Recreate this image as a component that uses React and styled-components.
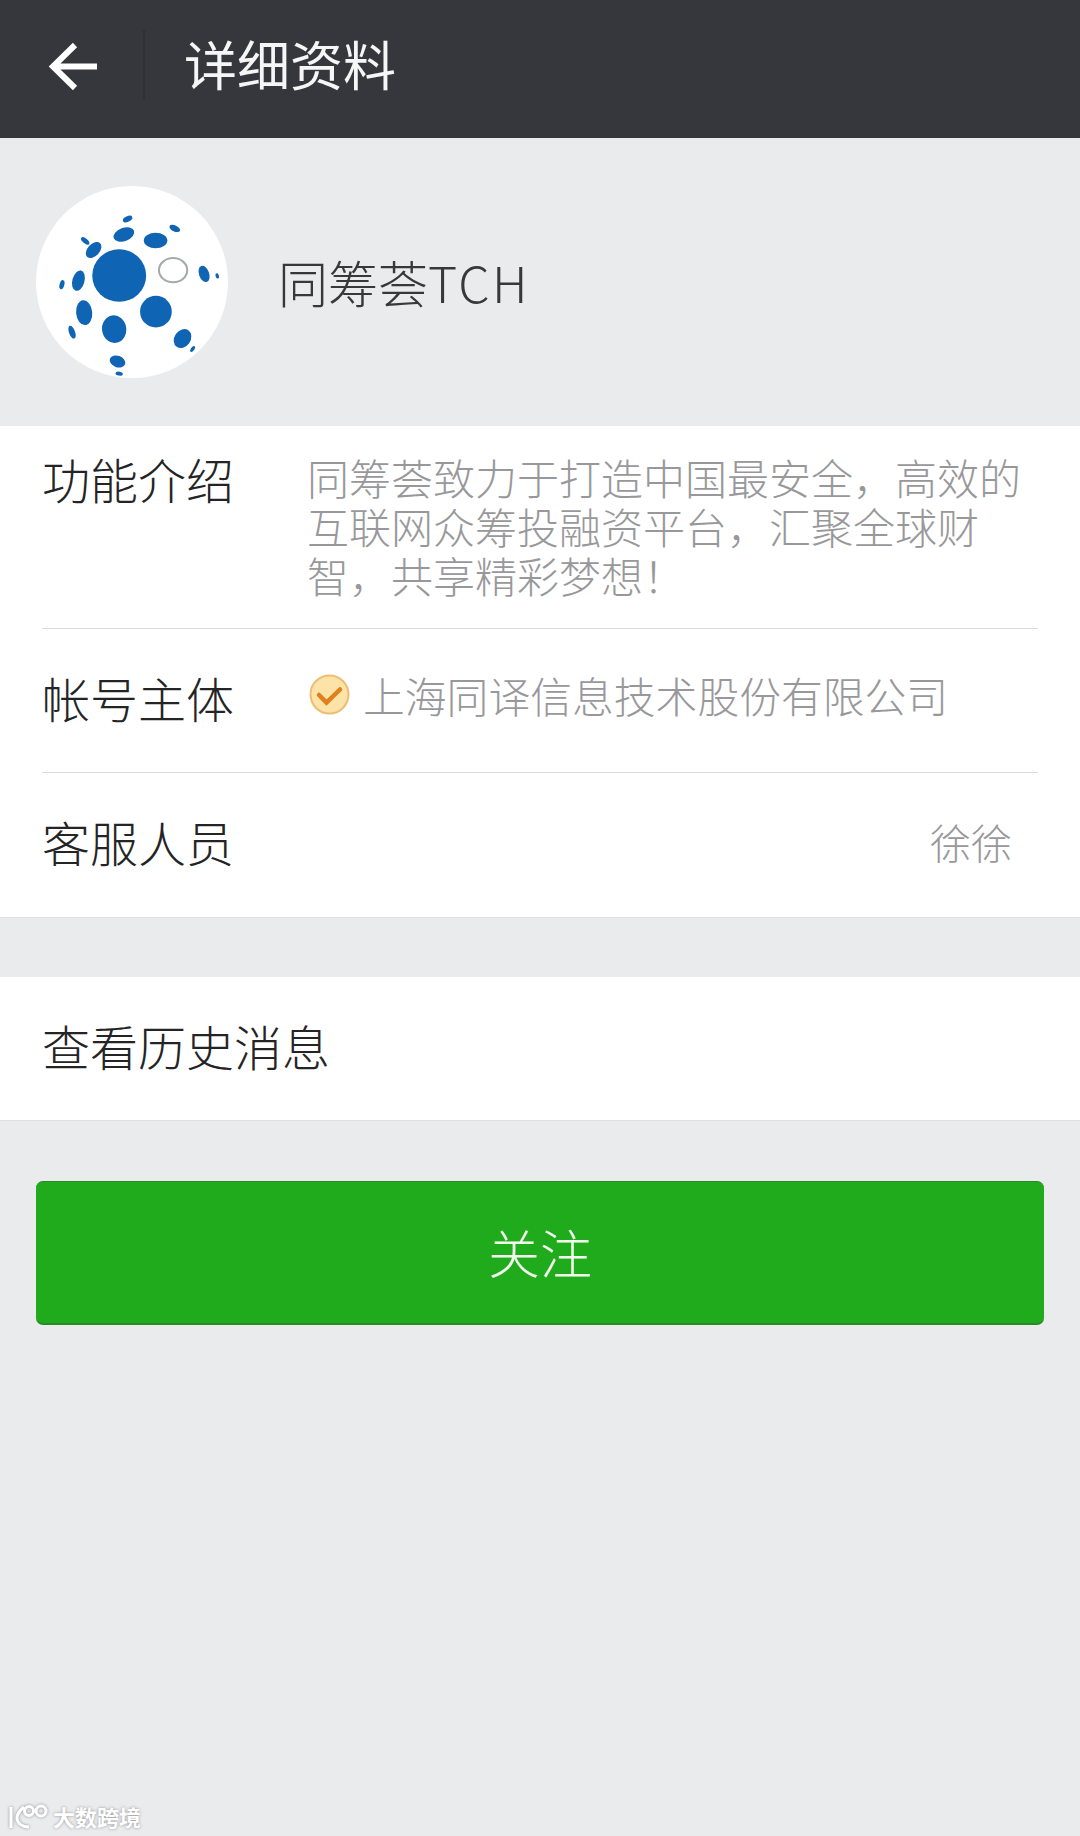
import React from "react";
import styled, { createGlobalStyle } from "styled-components";

const GlobalStyle = createGlobalStyle`
  html, body {
    margin: 0;
    padding: 0;
    background: #eaebed;
  }
  * {
    box-sizing: border-box;
  }
`;

const Page = styled.div`
  position: relative;
  width: 1080px;
  height: 1836px;
  overflow: hidden;
  background: #eaebed;
  font-family: "Noto Sans CJK SC", "Liberation Sans", sans-serif;
  font-weight: 400;
`;

const Header = styled.header`
  display: flex;
  align-items: center;
  height: 138px;
  padding: 0 0 8px 48px;
  background: #36373d;
`;

const BackIcon = styled.svg`
  display: block;
  width: 52px;
  height: 50px;
  margin-top: 4px;
`;

const HeaderDivider = styled.div`
  width: 2px;
  height: 70px;
  margin: 0 39px 0 43px;
  background: #2f3035;
`;

const Title = styled.h1`
  margin: 0 0 4px;
  color: #f6f6f6;
  font-size: 53px;
  font-weight: 400;
  line-height: 60px;
`;

const Profile = styled.section`
  display: flex;
  align-items: center;
  gap: 44px;
  height: 288px;
  padding: 0 0 0 36px;
`;

const Avatar = styled.svg`
  display: block;
  flex: none;
  width: 192px;
  height: 192px;
`;

const Name = styled.div`
  margin: 0 0 2px 6px;
  color: #38383a;
  font-size: 50px;
  font-weight: 300;
  line-height: 56px;
`;

const Latin = styled.span`
  letter-spacing: 2.3px;
`;

const Group = styled.section`
  background: #fff;
  border-bottom: 1px solid #dfdfe1;
  margin-bottom: ${(p) => p.$gap || 0}px;
`;

const Row = styled.div`
  display: flex;
  align-items: ${(p) => (p.$top ? "flex-start" : "center")};
  height: ${(p) => p.$height}px;
  margin: 0 42px;
  padding: ${(p) => p.$pad || "0 0 8px"};
  border-bottom: ${(p) => (p.$line ? "1px solid #dbdbe0" : "none")};
`;

const Label = styled.div`
  flex: none;
  width: 265px;
  color: #242426;
  font-size: 48px;
  font-weight: 300;
  line-height: 56px;
  white-space: nowrap;
`;

const Intro = styled.p`
  width: 716px;
  margin: 2px 0 0;
  color: #98989b;
  font-size: 42px;
  font-weight: 300;
  line-height: 49px;
`;

const Owner = styled.div`
  display: flex;
  align-items: center;
  gap: 13px;
  margin-bottom: 4px;
  padding-left: 2px;
  color: #98989b;
  font-size: 41.8px;
  font-weight: 300;
  line-height: 50px;
  white-space: nowrap;
`;

const VerifiedIcon = styled.svg`
  display: block;
  flex: none;
  width: 41px;
  height: 41px;
`;

const Staff = styled.div`
  margin-left: auto;
  margin-right: 26px;
  color: #98989b;
  font-size: 41px;
  font-weight: 300;
  line-height: 50px;
`;

const FollowButton = styled.button`
  display: block;
  width: 1008px;
  height: 144px;
  margin: 0 0 0 36px;
  padding: 0 0 2px;
  border: none;
  border-top: 1px solid #2a8a28;
  border-bottom: 2px solid #2a8a28;
  border-radius: 7px;
  background: #1fab1c;
  color: #f2fcec;
  font-family: inherit;
  font-size: 52px;
  font-weight: 300;
`;

const Watermark = styled.div`
  position: absolute;
  left: 8px;
  bottom: 6px;
  display: flex;
  align-items: center;
  gap: 3px;
  color: #fff;
  font-size: 22px;
  font-weight: 700;
  line-height: 28px;
  text-shadow: 0 0 3px #8f9092;
`;

const WatermarkLogo = styled.svg`
  display: block;
  width: 42px;
  height: 28px;
  filter: drop-shadow(0 0 1.5px #8f9092);
`;

// [cx, cy, rx, ry, rotation]
const dots = [
  [297, 318, 80, 78, 0],
  [406, 425, 47, 47, 0],
  [282, 477, 36, 41, -8],
  [193, 428, 24, 37, -5],
  [176, 333, 18, 31, 15],
  [221, 242, 18, 28, 42],
  [311, 196, 32, 20, -20],
  [405, 214, 35, 23, 0],
  [462, 178, 17, 9, 25],
  [549, 313, 15, 25, -20],
  [588, 319, 5, 8, -15],
  [485, 505, 24, 30, 35],
  [515, 536, 5, 10, 35],
  [292, 573, 24, 17, 20],
  [297, 609, 11, 6, 10],
  [157, 486, 9, 20, -20],
  [127, 345, 7, 14, 15],
  [196, 215, 15, 7, 40],
  [322, 150, 15, 8, -25],
];

function Logo() {
  return (
    <Avatar viewBox="50 52 570 570">
      <circle cx="335" cy="337" r="285" fill="#fff" />
      {dots.map(([cx, cy, rx, ry, rot]) => (
        <ellipse
          key={`${cx}-${cy}`}
          cx={cx}
          cy={cy}
          rx={rx}
          ry={ry}
          fill="#0f64b4"
          transform={`rotate(${rot} ${cx} ${cy})`}
        />
      ))}
      <ellipse cx="457" cy="302" rx="42" ry="36" fill="#fff" stroke="#a5a9ac" strokeWidth="6" />
    </Avatar>
  );
}

export default function App() {
  return (
    <Page>
      <GlobalStyle />
      <Header>
        <BackIcon viewBox="0 0 52 50">
          <path
            d="M49 24.500H5M27 3L5 24.500 27 46"
            fill="none"
            stroke="#fff"
            strokeWidth="6"
          />
        </BackIcon>
        <HeaderDivider />
        <Title>详细资料</Title>
      </Header>

      <Profile>
        <Logo />
        <Name>
          同筹荟<Latin>TCH</Latin>
        </Name>
      </Profile>

      <Group $gap={59}>
        <Row $top $line $height={203} $pad="24px 0 0">
          <Label>功能介绍</Label>
          <Intro>同筹荟致力于打造中国最安全，高效的互联网众筹投融资平台，汇聚全球财智，共享精彩梦想！</Intro>
        </Row>
        <Row $line $height={144}>
          <Label>帐号主体</Label>
          <Owner>
            <VerifiedIcon viewBox="0 0 41 41">
              <circle cx="20.500" cy="20.500" r="19" fill="#fde3a8" stroke="#edbd72" strokeWidth="2" />
              <path d="M10 21l7.500 7.500L31 15.500" fill="none" stroke="#e0801c" strokeWidth="4.500" strokeLinecap="round" />
            </VerifiedIcon>
            上海同译信息技术股份有限公司
          </Owner>
        </Row>
        <Row $height={144}>
          <Label>客服人员</Label>
          <Staff>徐徐</Staff>
        </Row>
      </Group>

      <Group $gap={60}>
        <Row $height={143}>
          <Label>查看历史消息</Label>
        </Row>
      </Group>

      <FollowButton>关注</FollowButton>

      <Watermark>
        <WatermarkLogo viewBox="0 0 42 28">
          <g fill="none" stroke="#fff" strokeWidth="3">
            <path d="M3 5v21M16 5C10 10 9 14 9 16c0 5 5 9 12 9" />
            <circle cx="21" cy="9" r="4.500" />
            <circle cx="33" cy="9" r="5" />
          </g>
        </WatermarkLogo>
        大数跨境
      </Watermark>
    </Page>
  );
}
